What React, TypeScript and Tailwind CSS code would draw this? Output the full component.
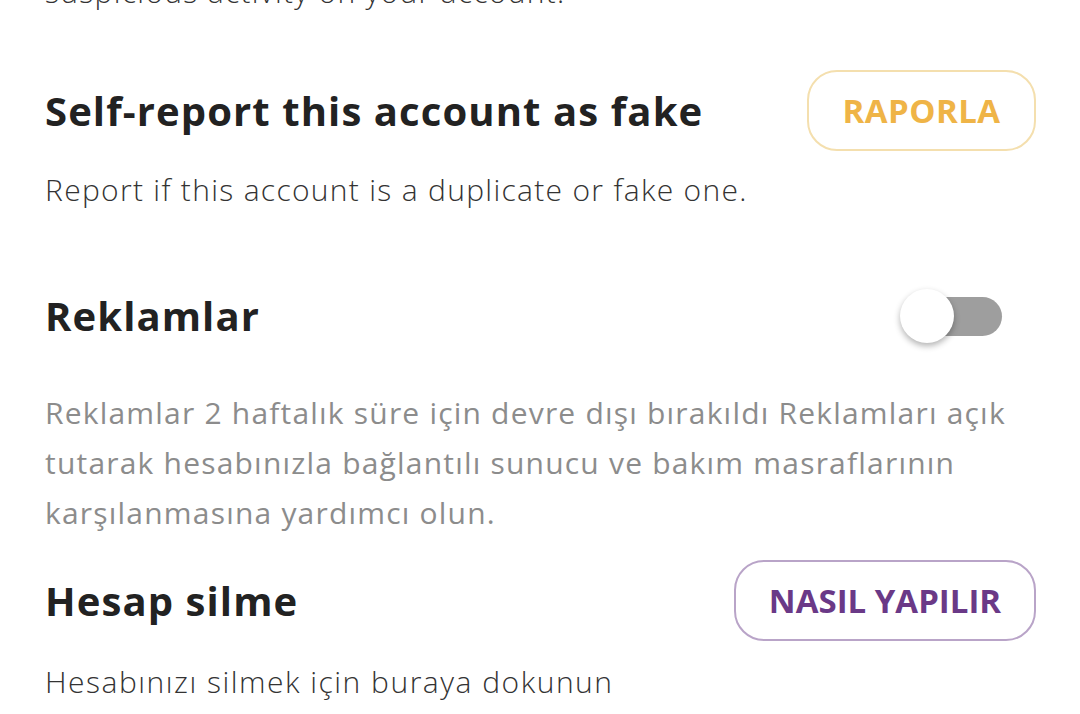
import React, { useState } from 'react';

const font = { fontFamily: '"Open Sans", "Noto Sans", sans-serif' };

interface OutlineButtonProps {
  label: string;
  tone: 'yellow' | 'purple';
  width: string;
}

const OutlineButton: React.FC<OutlineButtonProps> = ({ label, tone, width }) => {
  const colors =
    tone === 'yellow'
      ? 'border-[#f4dfae] text-[#efb447] tracking-[0.5px]'
      : 'border-[#b9a4c8] text-[#6a3987]';
  return (
    <button
      className={`h-[81px] ${width} rounded-[30px] border-2 bg-white text-[33px] font-bold ${colors}`}
    >
      {label}
    </button>
  );
};

const Toggle: React.FC = () => {
  const [on, setOn] = useState(false);
  return (
    <button
      onClick={() => setOn(!on)}
      className="relative flex h-[56px] w-[104px] items-center"
      aria-pressed={on}
    >
      <span className="ml-[3px] h-[39px] w-[99px] rounded-full bg-[#9e9e9e]" />
      <span className="absolute left-0 top-[1px] h-[54px] w-[54px] rounded-full bg-white shadow-[0_3px_6px_rgba(0,0,0,0.3)]" />
    </button>
  );
};

export default function App() {
  return (
    <div className="h-[714px] w-[1080px] overflow-hidden bg-white" style={font}>
      <div className="-mt-[33px] pl-[45px] pr-[44px]">
        <p className="text-[30px] font-light leading-[50px] tracking-[1.3px] text-[#333]">
          suspicious activity on your account.
        </p>

        <div className="mt-[53px] flex items-center justify-between">
          <h2 className="text-[40px] font-bold tracking-[1.1px] text-[#222]">
            Self-report this account as fake
          </h2>
          <OutlineButton label="RAPORLA" tone="yellow" width="w-[229px]" />
        </div>
        <p className="mt-[14px] text-[30px] font-light leading-[50px] tracking-[1.3px] text-[#333]">
          Report if this account is a duplicate or fake one.
        </p>

        <div className="mt-[61px] flex h-[80px] items-center justify-between pr-[32px]">
          <h2 className="text-[40px] font-bold tracking-[1.1px] text-[#222]">Reklamlar</h2>
          <Toggle />
        </div>
        <p className="mt-[32px] text-[30px] leading-[50px] tracking-[1.2px] text-[#8c8c8c]">
          Reklamlar 2 haftalık süre için devre dışı bırakıldı Reklamları açık tutarak hesabınızla
          bağlantılı sunucu ve bakım masraflarının karşılanmasına yardımcı olun.
        </p>

        <div className="mt-[22px] flex items-center justify-between">
          <h2 className="text-[40px] font-bold tracking-[1.1px] text-[#222]">Hesap silme</h2>
          <OutlineButton label="NASIL YAPILIR" tone="purple" width="w-[302px]" />
        </div>
        <p className="mt-[16px] text-[30px] font-light leading-[50px] tracking-[1.5px] text-[#333]">
          Hesabınızı silmek için buraya dokunun
        </p>
      </div>
    </div>
  );
}
